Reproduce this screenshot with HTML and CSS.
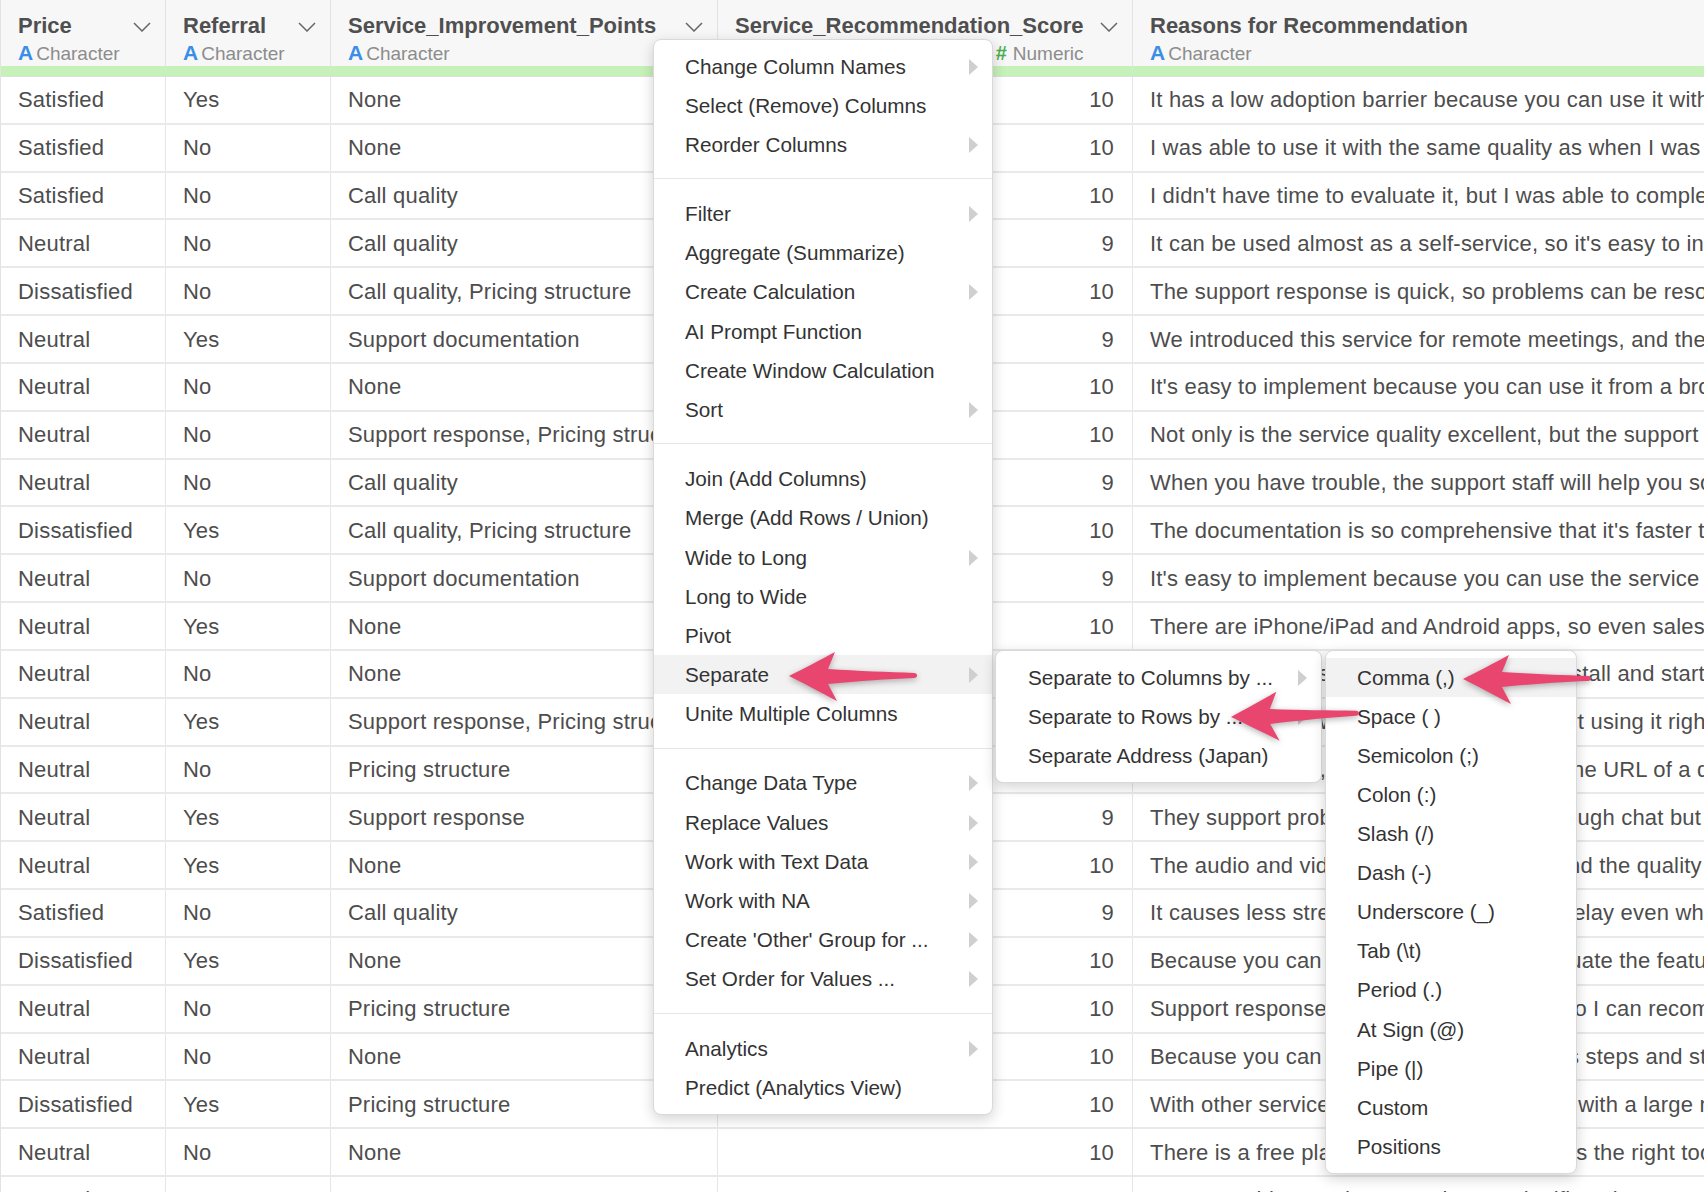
FILE: index.html
```html
<!DOCTYPE html>
<html lang="en">
<head>
    <meta charset="UTF-8">
    <title>Data Wrangling - Separate</title>
    <link rel="stylesheet" href="styles.css">
</head>
<body>
    <div class="grid">
        <div class="row head">
            <div class="hcell">
                <div class="hname">
                    <div class="title">Price</div>
                    <div class="type"><span class="ic-a">A</span>Character</div>
                </div>
                <svg class="chev" width="18" height="10" viewBox="0 0 18 10"><polyline points="1,1 9,9 17,1"/></svg>
            </div>
            <div class="hcell">
                <div class="hname">
                    <div class="title">Referral</div>
                    <div class="type"><span class="ic-a">A</span>Character</div>
                </div>
                <svg class="chev" width="18" height="10" viewBox="0 0 18 10"><polyline points="1,1 9,9 17,1"/></svg>
            </div>
            <div class="hcell">
                <div class="hname">
                    <div class="title">Service_Improvement_Points</div>
                    <div class="type"><span class="ic-a">A</span>Character</div>
                </div>
                <svg class="chev" width="18" height="10" viewBox="0 0 18 10"><polyline points="1,1 9,9 17,1"/></svg>
            </div>
            <div class="hcell">
                <div class="hname num">
                    <div class="title">Service_Recommendation_Score</div>
                    <div class="type"><span class="ic-num">#</span>Numeric</div>
                </div>
                <svg class="chev" width="18" height="10" viewBox="0 0 18 10"><polyline points="1,1 9,9 17,1"/></svg>
            </div>
            <div class="hcell">
                <div class="hname">
                    <div class="title">Reasons for Recommendation</div>
                    <div class="type"><span class="ic-a">A</span>Character</div>
                </div>
            </div>
        </div>

        <div class="row"><div class="cell">Satisfied</div><div class="cell">Yes</div><div class="cell">None</div><div class="cell n">10</div><div class="cell">It has a low adoption barrier because you can use it without installing any software.</div></div>
        <div class="row"><div class="cell">Satisfied</div><div class="cell">No</div><div class="cell">None</div><div class="cell n">10</div><div class="cell">I was able to use it with the same quality as when I was in the office, even from home.</div></div>
        <div class="row"><div class="cell">Satisfied</div><div class="cell">No</div><div class="cell">Call quality</div><div class="cell n">10</div><div class="cell">I didn't have time to evaluate it, but I was able to complete the setup without any trouble.</div></div>
        <div class="row"><div class="cell">Neutral</div><div class="cell">No</div><div class="cell">Call quality</div><div class="cell n">9</div><div class="cell">It can be used almost as a self-service, so it's easy to introduce to other teams.</div></div>
        <div class="row"><div class="cell">Dissatisfied</div><div class="cell">No</div><div class="cell">Call quality, Pricing structure</div><div class="cell n">10</div><div class="cell">The support response is quick, so problems can be resolved without delay.</div></div>
        <div class="row"><div class="cell">Neutral</div><div class="cell">Yes</div><div class="cell">Support documentation</div><div class="cell n">9</div><div class="cell">We introduced this service for remote meetings, and the quality has been stable.</div></div>
        <div class="row"><div class="cell">Neutral</div><div class="cell">No</div><div class="cell">None</div><div class="cell n">10</div><div class="cell">It's easy to implement because you can use it from a browser without installation.</div></div>
        <div class="row"><div class="cell">Neutral</div><div class="cell">No</div><div class="cell">Support response, Pricing structure</div><div class="cell n">10</div><div class="cell">Not only is the service quality excellent, but the support is also very responsive.</div></div>
        <div class="row"><div class="cell">Neutral</div><div class="cell">No</div><div class="cell">Call quality</div><div class="cell n">9</div><div class="cell">When you have trouble, the support staff will help you solve it right away.</div></div>
        <div class="row"><div class="cell">Dissatisfied</div><div class="cell">Yes</div><div class="cell">Call quality, Pricing structure</div><div class="cell n">10</div><div class="cell">The documentation is so comprehensive that it's faster than asking support.</div></div>
        <div class="row"><div class="cell">Neutral</div><div class="cell">No</div><div class="cell">Support documentation</div><div class="cell n">9</div><div class="cell">It's easy to implement because you can use the service without any special setup.</div></div>
        <div class="row"><div class="cell">Neutral</div><div class="cell">Yes</div><div class="cell">None</div><div class="cell n">10</div><div class="cell">There are iPhone/iPad and Android apps, so even sales staff can use it on the go.</div></div>
        <div class="row"><div class="cell">Neutral</div><div class="cell">No</div><div class="cell">None</div><div class="cell n">10</div><div class="cell">You do not need special equipment, just install and start using it.</div></div>
        <div class="row"><div class="cell">Neutral</div><div class="cell">Yes</div><div class="cell">Support response, Pricing structure</div><div class="cell n">9</div><div class="cell">Setup takes a few minutes, so you can start using it right away.</div></div>
        <div class="row"><div class="cell">Neutral</div><div class="cell">No</div><div class="cell">Pricing structure</div><div class="cell n">10</div><div class="cell">To join a meeting, you only need to share the URL of a dedicated room.</div></div>
        <div class="row"><div class="cell">Neutral</div><div class="cell">Yes</div><div class="cell">Support response</div><div class="cell n">9</div><div class="cell">They support problems kindly, not only through chat but also by phone.</div></div>
        <div class="row"><div class="cell">Neutral</div><div class="cell">Yes</div><div class="cell">None</div><div class="cell n">10</div><div class="cell">The audio and video are crisp and clear, and the quality is stable.</div></div>
        <div class="row"><div class="cell">Satisfied</div><div class="cell">No</div><div class="cell">Call quality</div><div class="cell n">9</div><div class="cell">It causes less stress because there is no delay even when many people join.</div></div>
        <div class="row"><div class="cell">Dissatisfied</div><div class="cell">Yes</div><div class="cell">None</div><div class="cell n">10</div><div class="cell">Because you can try for free, you can evaluate the features before buying.</div></div>
        <div class="row"><div class="cell">Neutral</div><div class="cell">No</div><div class="cell">Pricing structure</div><div class="cell n">10</div><div class="cell">Support response is very fast and stable, so I can recommend it to others.</div></div>
        <div class="row"><div class="cell">Neutral</div><div class="cell">No</div><div class="cell">None</div><div class="cell n">10</div><div class="cell">Because you can set it up in a few painless steps and start right away.</div></div>
        <div class="row"><div class="cell">Dissatisfied</div><div class="cell">Yes</div><div class="cell">Pricing structure</div><div class="cell n">10</div><div class="cell">With other services, it was hard to connect with a large number of people.</div></div>
        <div class="row"><div class="cell">Neutral</div><div class="cell">No</div><div class="cell">None</div><div class="cell n">10</div><div class="cell">There is a free plan, so you can check if it is the right tool for you.</div></div>
        <div class="row"><div class="cell">Neutral</div><div class="cell">No</div><div class="cell">None</div><div class="cell n">10</div><div class="cell">We were able to reduce travel costs significantly.</div></div>
    </div>

    <!-- column menu -->
    <div class="menu menu-main">
        <div class="item more">Change Column Names</div>
        <div class="item">Select (Remove) Columns</div>
        <div class="item more">Reorder Columns</div>
        <div class="sep"></div>
        <div class="item more">Filter</div>
        <div class="item">Aggregate (Summarize)</div>
        <div class="item more">Create Calculation</div>
        <div class="item">AI Prompt Function</div>
        <div class="item">Create Window Calculation</div>
        <div class="item more">Sort</div>
        <div class="sep"></div>
        <div class="item">Join (Add Columns)</div>
        <div class="item">Merge (Add Rows / Union)</div>
        <div class="item more">Wide to Long</div>
        <div class="item">Long to Wide</div>
        <div class="item">Pivot</div>
        <div class="item more on">Separate</div>
        <div class="item">Unite Multiple Columns</div>
        <div class="sep"></div>
        <div class="item more">Change Data Type</div>
        <div class="item more">Replace Values</div>
        <div class="item more">Work with Text Data</div>
        <div class="item more">Work with NA</div>
        <div class="item more">Create 'Other' Group for ...</div>
        <div class="item more">Set Order for Values ...</div>
        <div class="sep"></div>
        <div class="item more">Analytics</div>
        <div class="item">Predict (Analytics View)</div>
    </div>

    <div class="menu menu-sep">
        <div class="item more">Separate to Columns by ...</div>
        <div class="item more">Separate to Rows by ...</div>
        <div class="item">Separate Address (Japan)</div>
    </div>

    <div class="menu menu-delim">
        <div class="item on">Comma (,)</div>
        <div class="item">Space ( )</div>
        <div class="item">Semicolon (;)</div>
        <div class="item">Colon (:)</div>
        <div class="item">Slash (/)</div>
        <div class="item">Dash (-)</div>
        <div class="item">Underscore (_)</div>
        <div class="item">Tab (\t)</div>
        <div class="item">Period (.)</div>
        <div class="item">At Sign (@)</div>
        <div class="item">Pipe (|)</div>
        <div class="item">Custom</div>
        <div class="item">Positions</div>
    </div>

    <!-- callout arrows -->
    <svg class="arrows" width="1704" height="1192" viewBox="0 0 1704 1192">
        <defs>
            <path id="arrow" d="M0,0 C14,-7 31,-16 46,-24 L39,-7 C70,-5 100,-4 125,-3 C129,-3 129,2 125,2 C100,3 70,5 39,8 L48,25 C31,16 14,7 0,0 Z"/>
        </defs>
        <use href="#arrow" transform="translate(789,676)"/>
        <use href="#arrow" transform="translate(1231,717) rotate(-1.5)"/>
        <use href="#arrow" transform="translate(1463,679)"/>
    </svg>
</body>
</html>
```

FILE: styles.css
```css
* {
    box-sizing: border-box;
}

body {
    margin: 0;
    width: 1704px;
    height: 1192px;
    overflow: hidden;
    position: relative;
    background-color: #fff;
    font-family: "Liberation Sans", Arial, sans-serif;
    color: #4d4d4d;
}

.grid {
    border-left: 1px solid #e3e3e3;
    width: 1800px;
}

.row {
    display: grid;
    grid-template-columns: 165px 165px 387px 415px 668px;
    height: 47.83px;
    border-bottom: 2px solid #e9e9e9;
}

.cell {
    display: flex;
    align-items: center;
    padding: 1px 17px 0;
    border-right: 1px solid #e6e6e6;
    font-size: 22px;
    letter-spacing: 0.2px;
    white-space: nowrap;
    overflow: hidden;
}

.cell.n {
    justify-content: flex-end;
    padding-right: 18px;
}

/* header */
.row.head {
    height: 77px;
    border-bottom: 1px solid #dedede;
    background-color: #f7f7f7;
}

.hcell {
    display: flex;
    justify-content: space-between;
    align-items: flex-start;
    padding: 13px 14px 0 17px;
    border-right: 1px solid #e2e2e2;
    border-bottom: 10px solid #c6f1b8;
    white-space: nowrap;
}

.hname {
    display: flex;
    flex-direction: column;
}

.hname.num {
    align-items: flex-end;
}

.title {
    font-size: 22px;
    font-weight: bold;
    line-height: 26px;
    color: #4f4f4f;
}

.type {
    margin-top: 3px;
    font-size: 19px;
    line-height: 22px;
    color: #8c8c8c;
}

.ic-a {
    margin-right: 3px;
    font-size: 21px;
    font-weight: bold;
    color: #3a8ee6;
}

.ic-num {
    margin-right: 6px;
    font-size: 20px;
    font-weight: bold;
    color: #4caf50;
}

.chev {
    margin-top: 9px;
    flex-shrink: 0;
}

.chev polyline {
    fill: none;
    stroke: #666;
    stroke-width: 1.5;
}

/* menus */
.menu {
    position: absolute;
    padding: 7px 0;
    background-color: #fff;
    border: 1px solid #d9d9d9;
    border-radius: 8px;
    box-shadow: 0 4px 14px rgba(0, 0, 0, 0.18);
    font-size: 20.7px;
    color: #333;
}

.menu-main {
    left: 653px;
    top: 39px;
    width: 340px;
}

.menu-sep {
    left: 995px;
    top: 650px;
    width: 327px;
}

.menu-delim {
    left: 1325px;
    top: 650px;
    width: 252px;
}

.item {
    position: relative;
    display: flex;
    align-items: center;
    height: 39.12px;
    padding-left: 31px;
    white-space: nowrap;
}

.menu-sep .item {
    padding-left: 32px;
}

.item.on {
    background-color: #f2f2f2;
}

.item.more::after {
    content: "";
    position: absolute;
    right: 14px;
    top: 50%;
    margin-top: -8px;
    border-left: 9px solid #cfcfcf;
    border-top: 8px solid transparent;
    border-bottom: 8px solid transparent;
}

.sep {
    height: 1px;
    margin: 14px 0 15.4px;
    background-color: #e6e6e6;
}

/* arrows */
.arrows {
    position: absolute;
    left: 0;
    top: 0;
    pointer-events: none;
    fill: #e9466f;
    filter: drop-shadow(0 2px 3px rgba(0, 0, 0, 0.3));
}
```
